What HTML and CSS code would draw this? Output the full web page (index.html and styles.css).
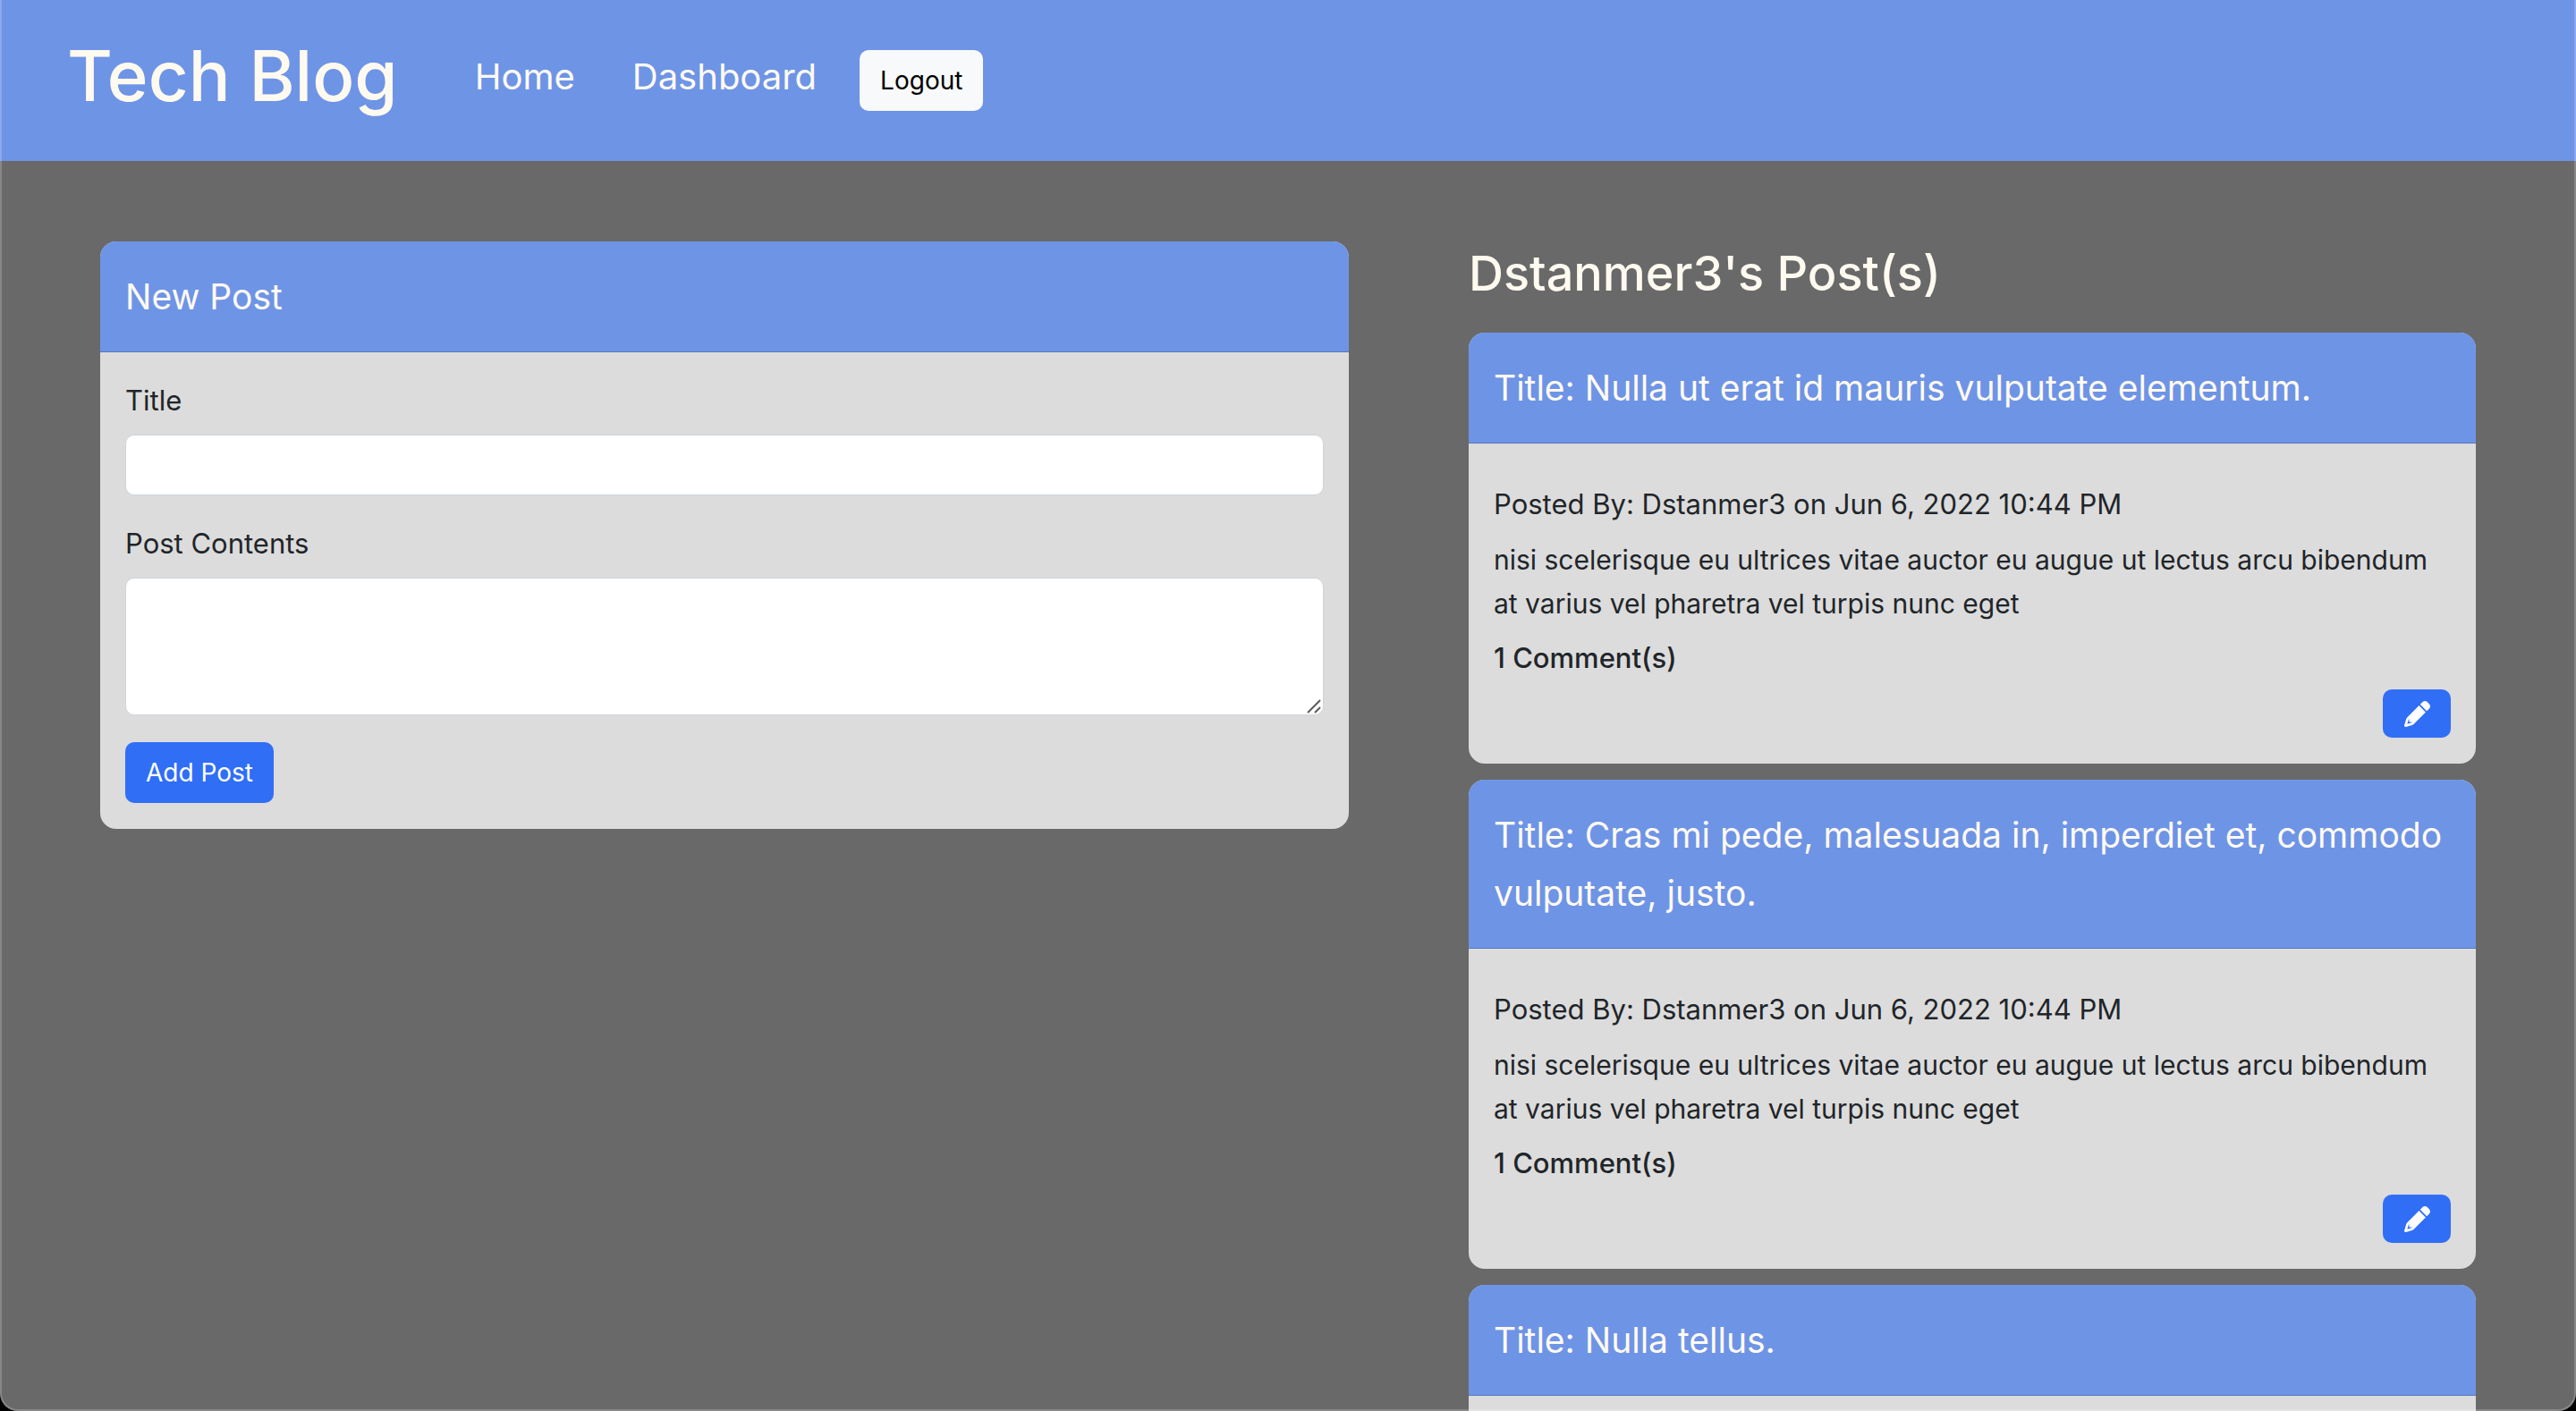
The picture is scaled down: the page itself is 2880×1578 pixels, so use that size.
FILE: index.html
```html
<!DOCTYPE html>
<html lang="en">
<head>
<meta charset="utf-8">
<title>Tech Blog</title>
<meta name="viewport" content="width=device-width, initial-scale=1">
<link rel="stylesheet" href="styles.css">
</head>
<body>
<svg class="sprite" aria-hidden="true">
  <symbol id="pencil" viewBox="0 0 512 512">
    <path fill-rule="evenodd" d="M421.7 220.3L188.5 453.4L154.6 419.5L158.1 416H112C103.2 416 96 408.8 96 400V353.9L92.51 357.4C87.78 362.2 84.31 368 82.42 374.4L59.44 452.6L137.6 429.6C143.1 427.7 149.8 424.2 154.6 419.5L188.5 453.4C178.1 463.8 165.2 471.5 151.1 475.6L30.77 511C22.35 513.5 13.24 511.2 7.03 504.1C.8198 498.8-1.502 489.7 .976 481.2L36.37 360.9C40.53 346.8 48.16 333.9 58.57 323.5L291.7 90.34L421.7 220.3zM492.7 58.75C517.7 83.74 517.7 124.3 492.7 149.3L444.3 197.7L314.3 67.72L362.7 19.32C387.7-5.678 428.3-5.678 453.3 19.32L492.7 58.75z"/>
  </symbol>
</svg>
<header class="navbar">
  <h1 class="brand">Tech Blog</h1>
  <nav class="nav">
    <a class="nav-link" href="#home">Home</a>
    <a class="nav-link" href="#dashboard">Dashboard</a>
    <button class="btn btn-light" type="button">Logout</button>
  </nav>
</header>
<main class="content">
  <section class="card new-post">
    <h2 class="card-header">New Post</h2>
    <form class="card-body">
      <label class="form-label" for="title">Title</label>
      <input class="form-control" id="title" type="text">
      <label class="form-label" for="contents">Post Contents</label>
      <div class="textarea-wrap">
        <textarea class="form-control" id="contents"></textarea>
        <svg class="grip" viewBox="0 0 16 16" aria-hidden="true"><path d="M1 15L15 1M9 15L15 9"/></svg>
      </div>
      <button class="btn btn-primary" type="button">Add Post</button>
    </form>
  </section>
  <section class="posts">
    <h2 class="posts-heading">Dstanmer3's Post(s)</h2>
    <article class="card">
      <h3 class="card-header">Title: Nulla ut erat id mauris vulputate elementum.</h3>
      <div class="card-body post-body">
        <p class="post-meta">Posted By: Dstanmer3 on Jun 6, 2022 10:44 PM</p>
        <p class="post-text">nisi scelerisque eu ultrices vitae auctor eu augue ut lectus arcu bibendum at varius vel pharetra vel turpis nunc eget</p>
        <p class="post-comments">1 Comment(s)</p>
        <button class="btn-edit" type="button" aria-label="Edit post"><svg class="icon"><use href="#pencil"/></svg></button>
      </div>
    </article>
    <article class="card">
      <h3 class="card-header">Title: Cras mi pede, malesuada in, imperdiet et, commodo vulputate, justo.</h3>
      <div class="card-body post-body">
        <p class="post-meta">Posted By: Dstanmer3 on Jun 6, 2022 10:44 PM</p>
        <p class="post-text">nisi scelerisque eu ultrices vitae auctor eu augue ut lectus arcu bibendum at varius vel pharetra vel turpis nunc eget</p>
        <p class="post-comments">1 Comment(s)</p>
        <button class="btn-edit" type="button" aria-label="Edit post"><svg class="icon"><use href="#pencil"/></svg></button>
      </div>
    </article>
    <article class="card">
      <h3 class="card-header">Title: Nulla tellus.</h3>
      <div class="card-body post-body"></div>
    </article>
  </section>
</main>
<div class="window-frame"></div>
</body>
</html>
```
FILE: styles.css
```css
* {
  box-sizing: border-box;
}

html {
  height: 100%;
  overflow: hidden;
  background: #000;
}

body {
  height: 100%;
  margin: 0;
  overflow: hidden;
  border-radius: 0 0 20px 20px;
  background: #696969;
  color: #212529;
  font: 400 31px/49px Inter, "Liberation Sans", sans-serif;
}

h1, h2, h3, p {
  margin: 0;
}

.sprite {
  display: none;
}

.navbar {
  display: flex;
  align-items: flex-start;
  gap: 86px;
  padding: 33px 75px 43px;
  background: #6e94e6;
  color: #fffaf0;
}

.brand {
  font-size: 78px;
  font-weight: 500;
  line-height: 104px;
}

.nav {
  display: flex;
  align-items: flex-start;
  padding-top: 23px;
}

.nav-link {
  margin-right: 64px;
  color: #fffaf0;
  font-size: 40px;
  line-height: 60px;
  text-decoration: none;
}

.nav-link + .btn {
  margin-left: -16px;
}

.btn {
  height: 68px;
  padding: 0 23px;
  border: 0;
  border-radius: 10px;
  font: 400 28px/68px Inter, "Liberation Sans", sans-serif;
}

.btn-light {
  background: #f8f9fa;
  color: #000;
}

.btn-primary {
  align-self: flex-start;
  background: #306ef6;
  color: #fff;
}

.content {
  display: grid;
  grid-template-columns: 1396fr 1126fr;
  align-items: start;
  gap: 134px;
  padding: 90px 112px 0;
}

.card {
  overflow: hidden;
  border-radius: 18px;
  background: #dcdcdc;
}

.card-header {
  padding: 29px 28px;
  border-bottom: 1px solid #5878bd;
  background: #6e94e6;
  color: #fffaf0;
  font-size: 39px;
  font-weight: 400;
  line-height: 65px;
}

.card-body {
  display: flex;
  flex-direction: column;
  padding: 29px 28px;
}

.form-label {
  margin-bottom: 14px;
}

.form-control {
  display: block;
  width: 100%;
  height: 68px;
  margin: 0 0 29px;
  padding: 10px 20px;
  border: 1px solid #ced4da;
  border-radius: 10px;
  background: #fff;
  color: #212529;
  font: inherit;
}

textarea.form-control {
  height: 154px;
  margin-bottom: 0;
  resize: vertical;
}

textarea::-webkit-resizer {
  display: none;
}

.textarea-wrap {
  position: relative;
  margin-bottom: 30px;
}

.grip {
  position: absolute;
  right: 3px;
  bottom: 2px;
  width: 16px;
  height: 16px;
  fill: none;
  stroke: #5c5c5c;
  stroke-width: 2;
  pointer-events: none;
}

.posts {
  display: flex;
  flex-direction: column;
  gap: 18px;
}

.posts-heading {
  margin-bottom: 12px;
  color: #fffaf0;
  font-size: 54px;
  font-weight: 500;
  line-height: 72px;
}

.post-body {
  padding-top: 43px;
}

.post-meta {
  margin-bottom: 14px;
}

.post-text {
  margin-bottom: 11px;
  font-size: 30px;
}

.post-comments {
  margin-bottom: 11px;
  font-weight: 500;
}

.btn-edit {
  display: flex;
  align-items: center;
  align-self: flex-end;
  justify-content: center;
  width: 76px;
  height: 54px;
  padding: 0;
  border: 0;
  border-radius: 10px;
  background: #306ef6;
  color: #fff;
}

.icon {
  width: 29px;
  height: 29px;
  fill: currentColor;
}

/* Thin highlight round the window edge, over the page content */
.window-frame {
  position: absolute;
  inset: 0;
  border: 2px solid rgba(255, 255, 255, 0.2);
  border-top: 0;
  border-radius: 0 0 20px 20px;
  pointer-events: none;
}
```
